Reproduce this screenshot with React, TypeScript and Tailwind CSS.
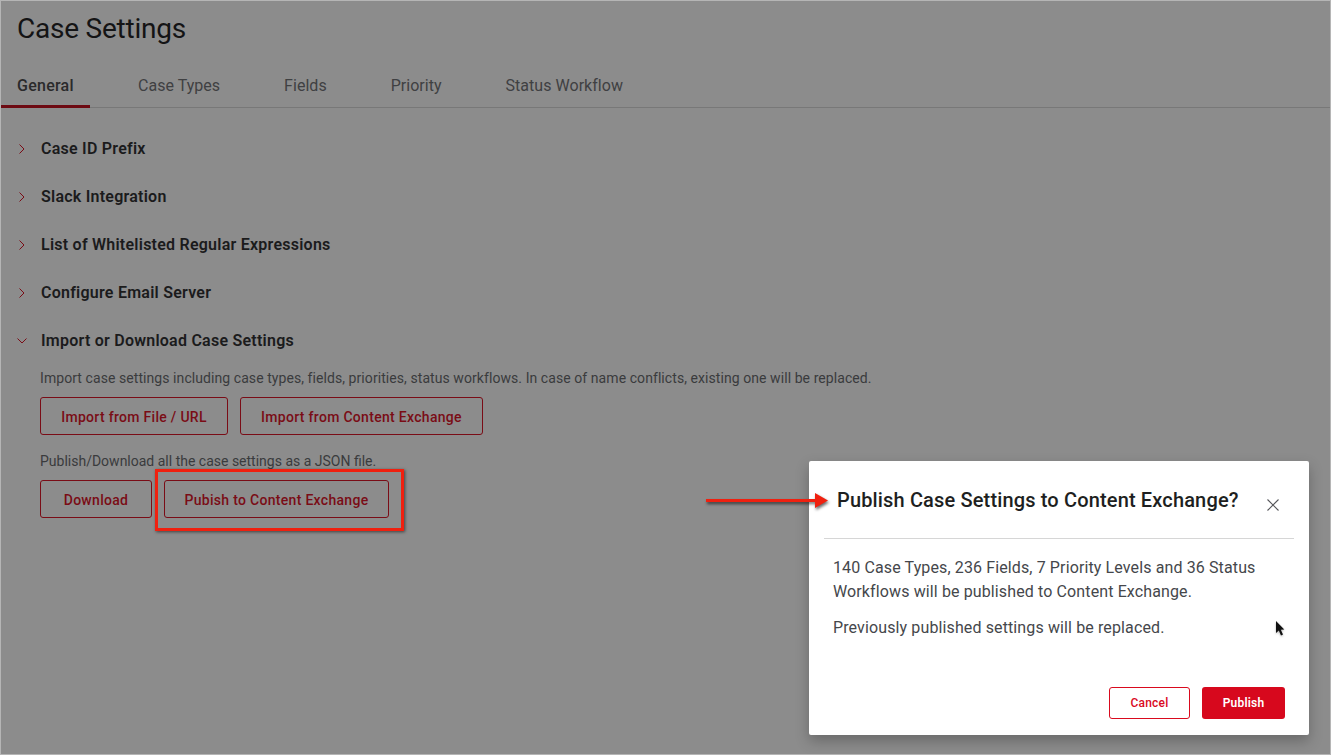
import React from "react";

const font = { fontFamily: '"Roboto", "Liberation Sans", sans-serif' };

function Chevron({ open = false }: { open?: boolean }) {
  return (
    <svg width="10" height="10" viewBox="0 0 10 10" fill="none" stroke="#7a0c16" strokeWidth="1" className="shrink-0">
      {open ? <path d="M0.5 2.5 L5 7 L9.5 2.5" /> : <path d="M2.5 0.5 L7 5 L2.5 9.5" />}
    </svg>
  );
}

function Row({ label, open = false }: { label: string; open?: boolean }) {
  return (
    <div className="flex h-12 items-center">
      <div className="flex w-[40px] shrink-0 justify-start pl-[16px]">
        <Chevron open={open} />
      </div>
      <span className="text-[16px] font-semibold tracking-[0.24px] text-[#1b1b1c]">{label}</span>
    </div>
  );
}

function OutlineBtn({ w, label }: { w: string; label: string }) {
  return (
    <button className={`${w} h-[38px] rounded-[3px] border border-[#7a0c16] pt-[2px] text-[14px] font-medium tracking-[0.3px] text-[#7a0c16]`}>
      {label}
    </button>
  );
}

export default function App() {
  return (
    <div style={font} className="relative h-[755px] w-[1331px] overflow-hidden border border-[#b5b5b5] bg-[#8c8c8c]">
      <h1 className="mb-0 h-[56px] pl-[16px] pt-[9px] text-[28px] leading-[38px] font-normal tracking-[-0.23px] text-[#141415]">Case Settings</h1>

      <div className="flex h-[51px] gap-8 border-b border-[#787878]">
        {["General", "Case Types", "Fields", "Priority", "Status Workflow"].map((t, i) => (
          <div
            key={t}
            className={
              i === 0
                ? "flex h-[51px] w-[89px] items-center border-b-[3px] border-[#6d0a12] px-4 pt-[9px] text-[16px] font-medium tracking-[0.25px] text-[#2a2a2b]"
                : "flex h-[50px] items-center px-4 pt-[8px] text-[16px] tracking-[0.03px] text-[#3f4042]"
            }
          >
            {t}
          </div>
        ))}
      </div>

      <div className="pt-[17px]">
        <Row label="Case ID Prefix" />
        <Row label="Slack Integration" />
        <Row label="List of Whitelisted Regular Expressions" />
        <Row label="Configure Email Server" />
        <Row label="Import or Download Case Settings" open />

        <div className="pl-[39px]">
          <p className="mt-[3px] text-[14px] leading-[20px] tracking-[0.07px] text-[#3a3b3d]">
            Import case settings including case types, fields, priorities, status workflows. In case of name conflicts, existing one will be replaced.
          </p>
          <div className="mt-[9px] flex gap-3">
            <OutlineBtn w="w-[188px]" label="Import from File / URL" />
            <OutlineBtn w="w-[243px]" label="Import from Content Exchange" />
          </div>
          <p className="mt-[16px] text-[14px] leading-[20px] tracking-[0px] text-[#3a3b3d]">Publish/Download all the case settings as a JSON file.</p>
          <div className="mt-[9px] flex gap-3">
            <OutlineBtn w="w-[112px]" label="Download" />
            <OutlineBtn w="w-[225px]" label="Pubish to Content Exchange" />
          </div>
        </div>
      </div>

      {/* annotation box */}
      <div className="absolute left-[154px] top-[468px] h-[62px] w-[249px] border-[3px] border-[#f0200f] shadow-[1px_1px_3px_rgba(0,0,0,0.55)]" />

      {/* modal */}
      <div className="absolute left-[808px] top-[460px] flex h-[274px] w-[500px] flex-col rounded-[2px] bg-white px-[15px] shadow-[0_6px_14px_rgba(0,0,0,0.25)]">
        <div className="flex h-[78px] items-center justify-between border-b border-[#d6d6d6]">
          <h2 className="pl-[13px] text-[20px] font-medium tracking-[0.15px] text-[#1e1f21]">Publish Case Settings to Content Exchange?</h2>
          <svg width="12" height="12" viewBox="0 0 12 12" fill="none" stroke="#55565a" strokeWidth="1.1" className="mr-[15px] mt-[11px]">
            <path d="M0.5 0.5 L11.5 11.5 M11.5 0.5 L0.5 11.5" />
          </svg>
        </div>
        <div className="px-[9px] pt-[17px] text-[16px] leading-[24px] tracking-[0.12px] text-[#45474b]">
          <p>140 Case Types, 236 Fields, 7 Priority Levels and 36 Status Workflows will be published to Content Exchange.</p>
          <p className="mt-3">Previously published settings will be replaced.</p>
        </div>
        <div className="mt-auto flex justify-end gap-3 pb-4 pr-[9px]">
          <button className="h-[32px] w-[81px] rounded-[3px] border border-[#d90a1e] bg-white text-[12px] font-medium tracking-[0.2px] text-[#d90a1e]">Cancel</button>
          <button className="h-[32px] w-[83px] rounded-[3px] bg-[#d7081d] text-[12px] font-semibold tracking-[0.2px] text-white">Publish</button>
        </div>
      </div>

      {/* annotation arrow */}
      <svg className="absolute left-[700px] top-[485px]" width="135" height="30" viewBox="0 0 135 30" fill="none" style={{ filter: "drop-shadow(1px 2px 1.5px rgba(0,0,0,0.6))" }}>
        <path d="M5 13 H115 V16 H5 Z" fill="#f0200f" />
        <path d="M114 7 L127 14.5 L114 22 Z" fill="#f0200f" />
      </svg>

      {/* cursor */}
      <svg className="absolute left-[1274px] top-[619px]" width="12" height="18" viewBox="0 0 12 18" style={{ filter: "drop-shadow(0.5px 1px 1px rgba(0,0,0,0.3))" }}>
        <path d="M1 1 V13 L3.8 10.6 L6 15.5 L8 14.6 L5.8 9.8 L9.3 9.5 Z" fill="#111" />
      </svg>
    </div>
  );
}
